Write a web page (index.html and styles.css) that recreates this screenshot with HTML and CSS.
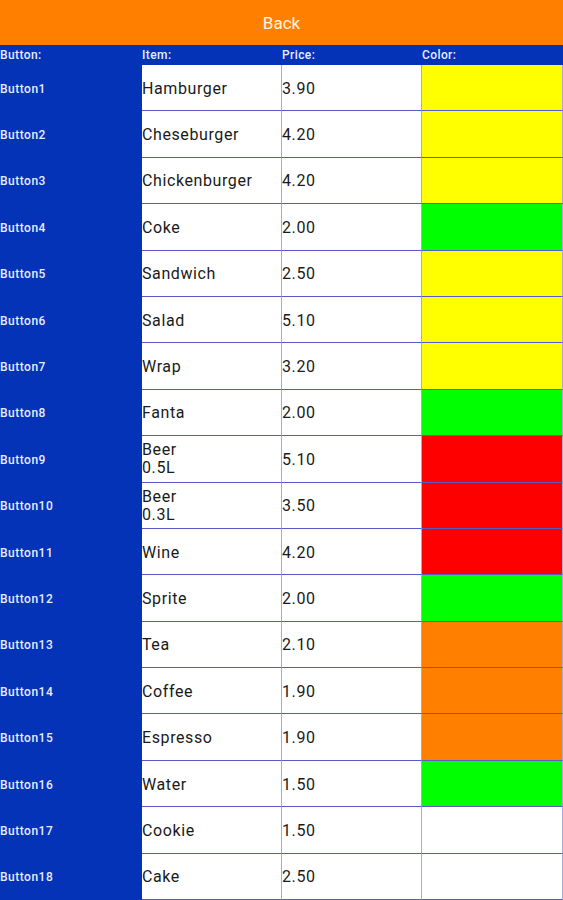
FILE: index.html
```html
<!DOCTYPE html>
<html lang="en">
<head>
    <meta charset="UTF-8">
    <meta name="viewport" content="width=device-width, initial-scale=1.0">
    <title>Menu</title>
    <link rel="stylesheet" href="styles.css">
</head>
<body>
    <div class="back_bar">Back</div>
    <div class="head_row">
        <div>Button:</div>
        <div>Item:</div>
        <div>Price:</div>
        <div>Color:</div>
    </div>
    <div class="list">
        <div class="row"><div class="btn">Button1</div><div class="cell">Hamburger</div><div class="cell">3.90</div><div class="cell yellow"></div></div>
        <div class="row"><div class="btn">Button2</div><div class="cell">Cheseburger</div><div class="cell">4.20</div><div class="cell yellow"></div></div>
        <div class="row"><div class="btn">Button3</div><div class="cell">Chickenburger</div><div class="cell">4.20</div><div class="cell yellow"></div></div>
        <div class="row"><div class="btn">Button4</div><div class="cell">Coke</div><div class="cell">2.00</div><div class="cell green"></div></div>
        <div class="row"><div class="btn">Button5</div><div class="cell">Sandwich</div><div class="cell">2.50</div><div class="cell yellow"></div></div>
        <div class="row"><div class="btn">Button6</div><div class="cell">Salad</div><div class="cell">5.10</div><div class="cell yellow"></div></div>
        <div class="row"><div class="btn">Button7</div><div class="cell">Wrap</div><div class="cell">3.20</div><div class="cell yellow"></div></div>
        <div class="row"><div class="btn">Button8</div><div class="cell">Fanta</div><div class="cell">2.00</div><div class="cell green"></div></div>
        <div class="row"><div class="btn">Button9</div><div class="cell two_line">Beer<br>0.5L</div><div class="cell">5.10</div><div class="cell red"></div></div>
        <div class="row"><div class="btn">Button10</div><div class="cell two_line">Beer<br>0.3L</div><div class="cell">3.50</div><div class="cell red"></div></div>
        <div class="row"><div class="btn">Button11</div><div class="cell">Wine</div><div class="cell">4.20</div><div class="cell red"></div></div>
        <div class="row"><div class="btn">Button12</div><div class="cell">Sprite</div><div class="cell">2.00</div><div class="cell green"></div></div>
        <div class="row"><div class="btn">Button13</div><div class="cell">Tea</div><div class="cell">2.10</div><div class="cell orange"></div></div>
        <div class="row"><div class="btn">Button14</div><div class="cell">Coffee</div><div class="cell">1.90</div><div class="cell orange"></div></div>
        <div class="row"><div class="btn">Button15</div><div class="cell">Espresso</div><div class="cell">1.90</div><div class="cell orange"></div></div>
        <div class="row"><div class="btn">Button16</div><div class="cell">Water</div><div class="cell">1.50</div><div class="cell green"></div></div>
        <div class="row"><div class="btn">Button17</div><div class="cell">Cookie</div><div class="cell">1.50</div><div class="cell"></div></div>
        <div class="row"><div class="btn">Button18</div><div class="cell">Cake</div><div class="cell">2.50</div><div class="cell"></div></div>
    </div>
</body>
</html>
```

FILE: styles.css
```css
body{
    margin: 0;
    font-family: Roboto, "Noto Sans", sans-serif;
    background-color: #0433b8;
    width: 563px;
    height: 900px;
    overflow: hidden;
}
.back_bar{
    height: 45px;
    background-color: #ff8000;
    color: #fff4e8;
    font-size: 17px;
    display: flex;
    align-items: center;
    justify-content: center;
}
.head_row{
    height: 20px;
    display: grid;
    grid-template-columns: 142px 140px 140px 141px;
    color: #e8ecff;
    font-size: 12px;
    font-weight: 500;
    letter-spacing: 0.4px;
    align-items: end;
}
.head_row div{
    padding-bottom: 3px;
}
.list{
    height: 835px;
    display: flex;
    flex-direction: column;
}
.row{
    flex: 1;
    display: grid;
    grid-template-columns: 142px 140px 140px 141px;
}
.btn{
    color: #e8ecff;
    font-size: 12px;
    font-weight: 500;
    letter-spacing: 0.5px;
    display: flex;
    align-items: center;
    padding-top: 1px;
}
.cell{
    background-color: white;
    border-bottom: 1px solid #5a5ac4;
    border-right: 1px solid #a8a8dc;
    color: #1a1a1a;
    font-size: 16px;
    letter-spacing: 0.6px;
    display: flex;
    align-items: center;
    padding-top: 1px;
}
.two_line{
    line-height: 18px;
}
.yellow{
    background-color: #ffff00;
}
.green{
    background-color: #00ff00;
}
.red{
    background-color: #ff0000;
}
.orange{
    background-color: #ff8000;
}
```
